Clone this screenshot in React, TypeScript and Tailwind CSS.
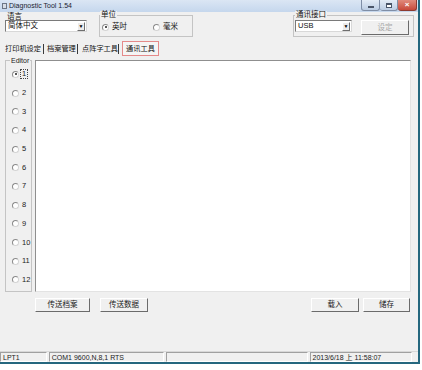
import React from 'react';

const font = "font-['Liberation_Sans','Noto_Sans_CJK_SC',sans-serif]";

const Radio = ({ checked }: { checked?: boolean }) => (
  <span className="relative inline-block h-[7px] w-[7px] shrink-0 rounded-full border border-[#8a8a8a] border-r-[#d4d4d4] border-b-[#d4d4d4] bg-white">
    {checked && <span className="absolute left-[1.5px] top-[1.5px] h-[2px] w-[2px] rounded-full bg-[#202020]" />}
  </span>
);

const Combo = ({ text, width }: { text: string; width: string }) => (
  <div className={`flex h-[12px] items-center border border-[#7a7a7a] border-r-[#d8d8d8] border-b-[#d8d8d8] bg-white ${width}`}>
    <span className="flex-1 pl-[2px] text-[7.5px] leading-none text-[#111]">{text}</span>
    <span className="mr-[1px] flex h-[9px] w-[8px] items-center justify-center border border-white border-r-[#6e6e6e] border-b-[#6e6e6e] bg-[#ececec] text-[5px] leading-none text-black">▼</span>
  </div>
);

const Button = ({ label, width, disabled }: { label: string; width: string; disabled?: boolean }) => (
  <div
    className={`flex h-[14px] items-center justify-center border border-white border-r-[#6b6b6b] border-b-[#6b6b6b] bg-[#f0f0f0] text-[7.5px] leading-none ${width} ${
      disabled ? 'text-[#a8a8a8]' : 'text-[#1a1a1a]'
    }`}
  >
    {label}
  </div>
);

const Panel = ({ text, width }: { text?: string; width: string }) => (
  <div className={`flex h-[10px] items-center border border-[#a0a0a0] border-r-white border-b-white pl-[2px] text-[7px] leading-none text-[#222] ${width}`}>
    {text}
  </div>
);

export default function App() {
  const editors = [1, 2, 3, 4, 5, 6, 7, 8, 9, 10, 11, 12];

  return (
    <div className={`h-[370px] w-[422px] bg-white ${font}`}>
      <div className="flex h-[364px] w-[420px] flex-col border-r-2 border-b-2 border-[#25677e] bg-[#f0f0f0]">
        {/* Title bar */}
        <div className="flex h-[12px] shrink-0 items-start bg-gradient-to-b from-[#dbe6f4] to-[#c5d7ed]">
          <span className="ml-[2px] mt-[3px] h-[6px] w-[5px] border border-[#6d7685] bg-[#d8dde5]" />
          <span className="ml-[2px] mt-[2px] text-[7px] leading-[8px] text-[#1b2330]">Diagnostic Tool 1.54</span>
          <div className="ml-auto mr-[1px] flex">
            <div className="flex h-[11px] w-[19px] items-center justify-center rounded-b-[3px] border border-t-0 border-[#7f8ea6] bg-gradient-to-b from-[#e4ecf6] to-[#bccde3]">
              <span className="mt-[3px] h-[2px] w-[6px] border border-[#4a5568] bg-white" />
            </div>
            <div className="flex h-[11px] w-[18px] items-center justify-center rounded-b-[3px] border border-t-0 border-l-0 border-[#7f8ea6] bg-gradient-to-b from-[#e4ecf6] to-[#bccde3]">
              <span className="h-[5px] w-[6px] border border-[#4a5568] border-t-2 bg-white" />
            </div>
            <div className="flex h-[11px] w-[19px] items-center justify-center rounded-b-[3px] border border-t-0 border-l-0 border-[#8c3b31] bg-gradient-to-b from-[#e08a7c] to-[#c7483a] text-[8px] font-bold leading-none text-white">
              ×
            </div>
          </div>
        </div>

        {/* Settings row */}
        <div className="flex h-[28px] shrink-0 items-start pl-[5px]">
          <div className="flex w-[82px] flex-col">
            <span className="h-[8px] pl-[2px] text-[7.5px] leading-[9px] text-[#111]">语言</span>
            <Combo text="简体中文" width="w-[82px]" />
          </div>

          <div className="relative ml-[12px] mt-[3px] flex h-[22px] w-[94px] items-center border border-[#c4c4c4] pl-[2px]">
            <span className="absolute -top-[5px] left-[0px] bg-[#f0f0f0] px-[1px] text-[7.5px] leading-[8px] text-[#111]">单位</span>
            <div className="mt-[2px] flex items-center gap-[3px]">
              <Radio checked />
              <span className="text-[7.5px] leading-none text-[#111]">英吋</span>
            </div>
            <div className="ml-[26px] mt-[2px] flex items-center gap-[3px]">
              <Radio />
              <span className="text-[7.5px] leading-none text-[#111]">毫米</span>
            </div>
          </div>

          <div className="relative ml-[100px] mt-[3px] flex h-[22px] w-[121px] items-start border border-[#c4c4c4] pl-[1px] pt-[4px]">
            <span className="absolute -top-[5px] left-[1px] bg-[#f0f0f0] px-[1px] text-[7.5px] leading-[8px] text-[#111]">通讯接口</span>
            <Combo text="USB" width="w-[57px]" />
            <div className="ml-[9px]">
              <Button label="设定" width="w-[48px] h-[15px]" disabled />
            </div>
          </div>
        </div>

        {/* Tabs */}
        <div className="flex h-[17px] shrink-0 items-center pl-[5px] text-[7.2px] leading-none text-[#111]">
          <span className="w-[38px]">打印机设定</span>
          <span className="h-[10px] w-[1px] bg-[#3a3a3a]" />
          <span className="ml-[3px] w-[30px]">档案管理</span>
          <span className="h-[10px] w-[1px] bg-[#3a3a3a]" />
          <span className="ml-[4px] w-[36px]">点阵字工具</span>
          <span className="h-[10px] w-[1px] bg-[#3a3a3a]" />
          <span className="ml-[3px] flex h-[15px] w-[37px] items-center justify-center border border-[#e58a8a] bg-[#f5f5f5]">通讯工具</span>
        </div>

        {/* Editor + text area */}
        <div className="mt-[3px] flex h-[233px] shrink-0 pl-[5px]">
          <div className="relative flex h-[232px] w-[27px] flex-col border border-[#c4c4c4] pl-[6px] pt-[4px]">
            <span className="absolute -top-[4px] left-[4px] bg-[#f0f0f0] px-[1px] text-[7px] leading-[7px] text-[#222]">Editor</span>
            {editors.map((n) => (
              <div key={n} className="flex h-[18.7px] items-center gap-[2px]">
                <Radio checked={n === 1} />
                <span
                  className={`text-[7.5px] leading-[8px] text-[#222] ${
                    n === 1 ? 'outline outline-1 outline-dotted outline-[#444] px-[1px]' : 'px-[1px]'
                  }`}
                >
                  {n}
                </span>
              </div>
            ))}
          </div>
          <div className="ml-[3px] h-[232px] w-[376px] border border-[#8f8f8f] border-r-[#e3e3e3] border-b-[#e3e3e3] bg-white" />
        </div>

        {/* Action buttons */}
        <div className="mt-[5px] flex shrink-0 pl-[35px] pr-[8px]">
          <Button label="传送档案" width="w-[55px]" />
          <div className="ml-[10px]">
            <Button label="传送数据" width="w-[48px]" />
          </div>
          <div className="flex-1" />
          <Button label="载入" width="w-[48px]" />
          <div className="ml-[4px]">
            <Button label="储存" width="w-[47px]" />
          </div>
        </div>

        <div className="flex-1" />

        {/* Status bar */}
        <div className="flex h-[11px] shrink-0 items-end gap-[2px] border-t border-[#d8d8d8] pr-[6px]">
          <Panel text="LPT1" width="w-[47px]" />
          <Panel text="COM1 9600,N,8,1 RTS" width="w-[116px]" />
          <Panel width="w-[142px]" />
          <Panel text="2013/6/18   上 11:58:07" width="w-[103px]" />
        </div>
      </div>
    </div>
  );
}
